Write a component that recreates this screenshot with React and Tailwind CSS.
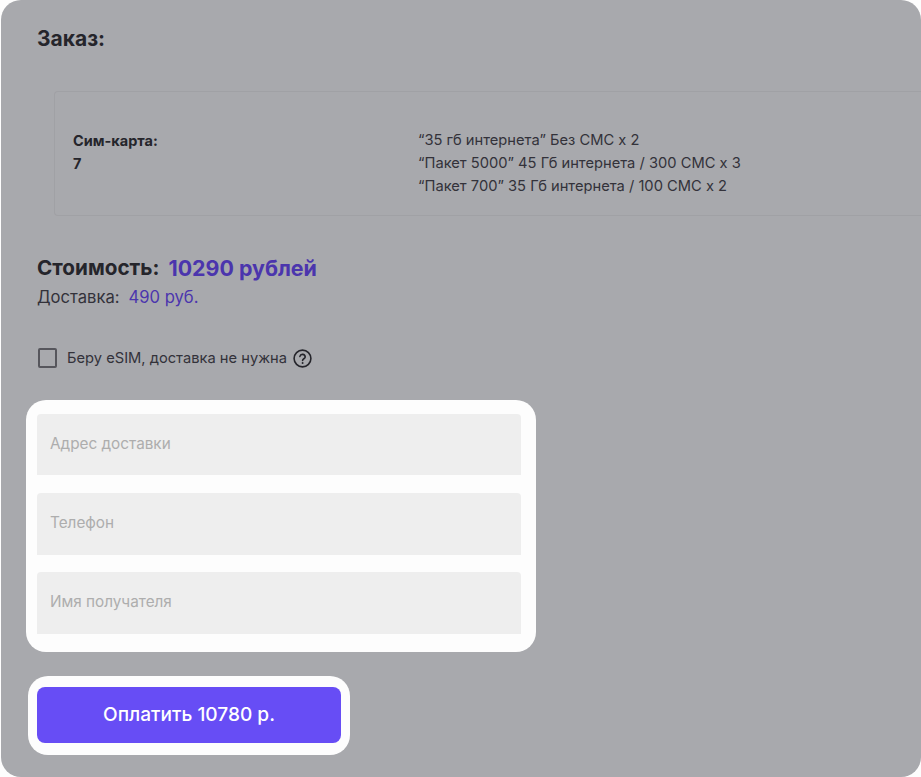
const items = [
  '“35 гб интернета” Без СМС x 2',
  '“Пакет 5000” 45 Гб интернета / 300 СМС x 3',
  '“Пакет 700” 35 Гб интернета / 100 СМС x 2',
]

const fields = [
  { label: 'Адрес доставки', height: 'h-[61px]', gap: 'mb-[18px]' },
  { label: 'Телефон', height: 'h-[62px]', gap: 'mb-[17px]' },
  { label: 'Имя получателя', height: 'h-[62px]', gap: '' },
]

function HelpIcon() {
  return (
    <svg width="19" height="19" viewBox="0 0 19 19" fill="none" stroke="#25252b" strokeWidth="1.6" strokeLinecap="round">
      <circle cx="9.5" cy="9.5" r="8.4" />
      <path d="M6.9 7.4a2.7 2.7 0 0 1 5.3.5c0 1.7-2.6 2-2.6 3.5" />
      <path d="M9.6 14v.1" strokeWidth="1.9" />
    </svg>
  )
}

export default function App() {
  return (
    <div className="h-[777px] w-[921px] overflow-hidden bg-[#fdfdfd] pl-px font-['Inter',sans-serif] text-[#25252b]">
      <div className="h-[777px] rounded-[20px] bg-[#a8a9ad] pt-[26px]">
        {/* Заказ */}
        <h2 className="ml-9 text-[21px] font-bold leading-[26px]">Заказ:</h2>

        <div className="ml-[53px] mt-[39px] flex h-[125px] items-start rounded-l border border-r-0 border-[#a0a1a5] pl-[18px] pt-[37px]">
          <div className="w-[345px] text-[14.5px] font-bold leading-[23px]">
            <p>Сим-карта:</p>
            <p>7</p>
          </div>
          <div className="text-[14.7px] leading-[23px] text-[#33323a]">
            {items.map((item) => (
              <p key={item}>{item}</p>
            ))}
          </div>
        </div>

        {/* Стоимость */}
        <div className="ml-9 mt-[37px] flex gap-[9px] font-bold leading-[30px]">
          <span className="text-[20.7px]">Стоимость:</span>
          <span className="text-[21.4px] text-[#4b35ad]">10290 рублей</span>
        </div>
        <div className="ml-9 flex gap-[9px] text-[16.6px] leading-[28px] text-[#33323a]">
          <span>Доставка:</span>
          <span className="text-[#4b35ad]">490 руб.</span>
        </div>

        <label className="ml-[37px] mt-[37px] flex h-[20px] items-center">
          <span className="h-[20px] w-[19px] rounded-[2px] border-2 border-[#56565c]" />
          <span className="ml-[10px] text-[14.7px] text-[#33323a]">Беру eSIM, доставка не нужна</span>
          <span className="ml-[6px] flex">
            <HelpIcon />
          </span>
        </label>

        {/* Форма */}
        <div className="ml-[25px] mt-[32px] w-[510px] rounded-[20px] bg-[#fdfdfd] pb-[18px] pl-[11px] pr-[15px] pt-[14px]">
          {fields.map(({ label, height, gap }) => (
            <div
              key={label}
              className={`flex items-center rounded-t-[4px] bg-[#eeeeee] pb-px pl-[13px] text-[15.3px] text-[#adadad] ${height} ${gap}`}
            >
              {label}
            </div>
          ))}
        </div>

        <div className="ml-[27px] mt-6 w-[322px] rounded-[20px] bg-[#fdfdfd] px-[9px] pb-3 pt-[11px]">
          <button className="flex h-14 w-full items-center justify-center rounded-lg bg-[#674df5] pb-px text-[19.1px] font-medium text-white">
            Оплатить 10780 р.
          </button>
        </div>
      </div>
    </div>
  )
}
